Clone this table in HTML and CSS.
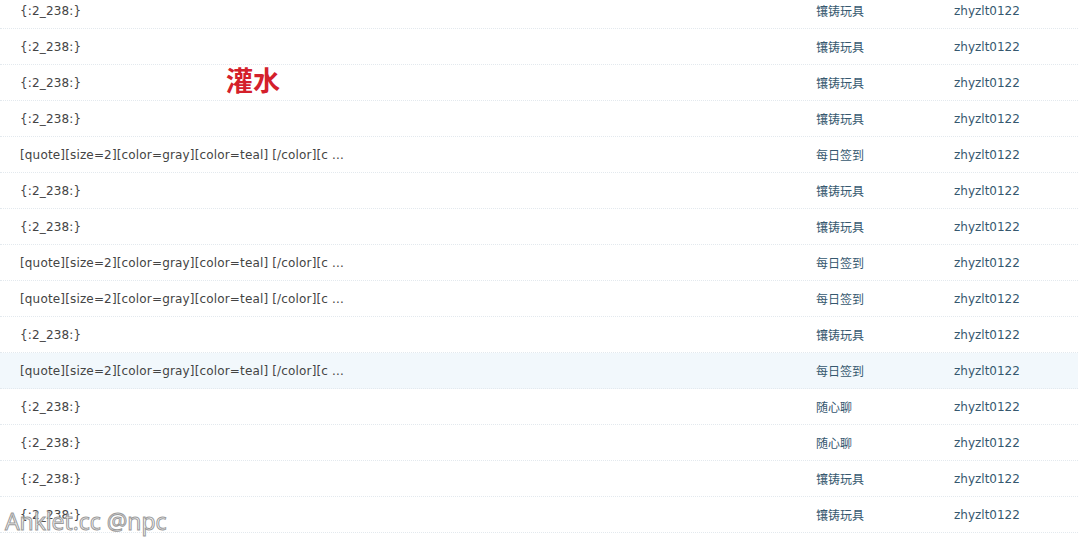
FILE: index.html
```html
<!DOCTYPE html>
<html lang="zh">
<head>
<meta charset="utf-8">
<title>threads</title>
<link rel="stylesheet" href="styles.css">
</head>
<body>
<div class="page">
  <div class="list">
    <div class="row"><span class="subj">{:2_238:}</span><a class="forum">镶铸玩具</a><a class="author">zhyzlt0122</a></div>
    <div class="row"><span class="subj">{:2_238:}</span><a class="forum">镶铸玩具</a><a class="author">zhyzlt0122</a></div>
    <div class="row"><span class="subj">{:2_238:}</span><a class="forum">镶铸玩具</a><a class="author">zhyzlt0122</a></div>
    <div class="row"><span class="subj">{:2_238:}</span><a class="forum">镶铸玩具</a><a class="author">zhyzlt0122</a></div>
    <div class="row"><span class="subj">[quote][size=2][color=gray][color=teal] [/color][c ...</span><a class="forum">每日签到</a><a class="author">zhyzlt0122</a></div>
    <div class="row"><span class="subj">{:2_238:}</span><a class="forum">镶铸玩具</a><a class="author">zhyzlt0122</a></div>
    <div class="row"><span class="subj">{:2_238:}</span><a class="forum">镶铸玩具</a><a class="author">zhyzlt0122</a></div>
    <div class="row"><span class="subj">[quote][size=2][color=gray][color=teal] [/color][c ...</span><a class="forum">每日签到</a><a class="author">zhyzlt0122</a></div>
    <div class="row"><span class="subj">[quote][size=2][color=gray][color=teal] [/color][c ...</span><a class="forum">每日签到</a><a class="author">zhyzlt0122</a></div>
    <div class="row"><span class="subj">{:2_238:}</span><a class="forum">镶铸玩具</a><a class="author">zhyzlt0122</a></div>
    <div class="row hover"><span class="subj">[quote][size=2][color=gray][color=teal] [/color][c ...</span><a class="forum">每日签到</a><a class="author">zhyzlt0122</a></div>
    <div class="row"><span class="subj">{:2_238:}</span><a class="forum">随心聊</a><a class="author">zhyzlt0122</a></div>
    <div class="row"><span class="subj">{:2_238:}</span><a class="forum">随心聊</a><a class="author">zhyzlt0122</a></div>
    <div class="row"><span class="subj">{:2_238:}</span><a class="forum">镶铸玩具</a><a class="author">zhyzlt0122</a></div>
    <div class="row"><span class="subj">{:2_238:}</span><a class="forum">镶铸玩具</a><a class="author">zhyzlt0122</a></div>
  </div>
  <div class="stamp">灌水</div>
  <div class="watermark">Anklet.cc @npc</div>
</div>
</body>
</html>
```
FILE: styles.css
```css
html, body {
  margin: 0;
  padding: 0;
  background: #fff;
  overflow: hidden;
}
.page {
  position: relative;
  width: 1078px;
  height: 542px;
  overflow: hidden;
  font-family: "DejaVu Sans", "Noto Sans CJK SC", sans-serif;
  font-size: 12px;
}
.list {
  margin-top: -7px;
}
.row {
  display: grid;
  grid-template-columns: 816px 138px 1fr;
  align-items: center;
  height: 35px;
  border-bottom: 1px dotted #e3e9ee;
}
.row.hover {
  background: #f2f8fc;
}
.subj {
  padding-left: 20px;
  color: #444;
  white-space: nowrap;
  letter-spacing: 0.16px;
}
.forum, .author {
  color: #36586f;
  text-decoration: none;
}
.forum {
  font-family: "Noto Sans CJK SC", sans-serif;
}
.stamp {
  position: absolute;
  left: 226px;
  top: 64px;
  color: #d4202b;
  font-size: 27px;
  font-weight: bold;
  font-family: "Noto Sans CJK SC", sans-serif;
  line-height: 32px;
}
.watermark {
  position: absolute;
  left: 5px;
  top: 506px;
  font-family: "Open Sans", sans-serif;
  font-size: 23px;
  color: rgba(255,255,255,0.85);
  -webkit-text-stroke: 1px #9a9a9a;
  line-height: 30px;
}
```
